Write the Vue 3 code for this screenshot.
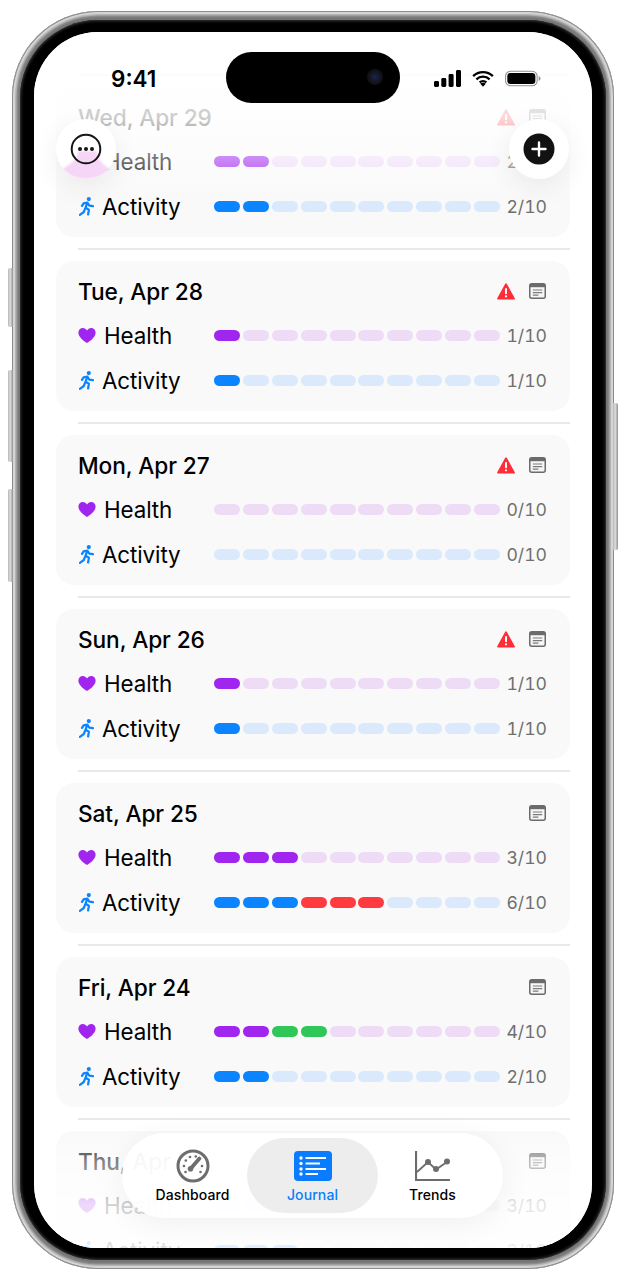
<script setup>
const P = '#a025ef', PL = '#eedcf7', B = '#0a84ff', BL = '#dae9fb', R = '#ff3b3f', G = '#30c759'

const seg = (colors, light) => {
  const out = []
  colors.forEach(([c, n]) => { for (let i = 0; i < n; i++) out.push(c) })
  while (out.length < 10) out.push(light)
  return out
}

const days = [
  { date: 'Wed, Apr 29', alert: true, health: seg([[P, 2]], PL), hc: '2/10', activity: seg([[B, 2]], BL), ac: '2/10' },
  { date: 'Tue, Apr 28', alert: true, health: seg([[P, 1]], PL), hc: '1/10', activity: seg([[B, 1]], BL), ac: '1/10' },
  { date: 'Mon, Apr 27', alert: true, health: seg([], PL), hc: '0/10', activity: seg([], BL), ac: '0/10' },
  { date: 'Sun, Apr 26', alert: true, health: seg([[P, 1]], PL), hc: '1/10', activity: seg([[B, 1]], BL), ac: '1/10' },
  { date: 'Sat, Apr 25', alert: false, health: seg([[P, 3]], PL), hc: '3/10', activity: seg([[B, 3], [R, 3]], BL), ac: '6/10' },
  { date: 'Fri, Apr 24', alert: false, health: seg([[P, 2], [G, 2]], PL), hc: '4/10', activity: seg([[B, 2]], BL), ac: '2/10' },
  { date: 'Thu, Apr 23', alert: false, health: seg([[P, 3]], PL), hc: '3/10', activity: seg([[B, 3]], BL), ac: '3/10' }
]
</script>

<template>
  <div class="page">
    <div class="frame">
      <i class="side l1"></i><i class="side l2"></i><i class="side l3"></i><i class="side r1"></i>
      <div class="black">
        <div class="screen">
          <div class="list">
            <div class="rule"></div>
            <template v-for="d in days" :key="d.date">
              <article class="card">
                <header class="head">
                  <h2 class="date">{{ d.date }}</h2>
                  <svg v-if="d.alert" class="alert" viewBox="0 0 18 17" width="18" height="17">
                    <path d="M9 1.200 17 15.600H1Z" fill="#ff2d38" stroke="#ff2d38" stroke-width="1.800" stroke-linejoin="round"/>
                    <rect x="8" y="5" width="2" height="6.200" rx="1" fill="#fff"/>
                    <circle cx="9" cy="13.300" r="1.100" fill="#fff"/>
                  </svg>
                  <svg class="doc" viewBox="0 0 17 16" width="17" height="16">
                    <rect x=".75" y=".75" width="15.500" height="14.500" rx="2" fill="#f6f6f6" stroke="#6b6b6b" stroke-width="1.500"/>
                    <rect x="1" y="1" width="15" height="3.200" fill="#6b6b6b"/>
                    <path d="M3.800 7h9.400M3.800 9.600h9.400M3.800 12.200h5.600" stroke="#7b7b7b" stroke-width="1.200"/>
                  </svg>
                </header>
                <div class="row">
                  <span class="label">
                    <svg class="heart" viewBox="0 0 18 16" width="18" height="17">
                      <path d="M9 15.600C3.600 11.800.4 9 .4 5 .4 2.400 2.400.4 4.800.4 6.600.4 8.100 1.400 9 3c.9-1.600 2.400-2.600 4.200-2.600 2.400 0 4.400 2 4.400 4.600 0 4-3.200 6.800-8.600 10.600Z" fill="#a025ef"/>
                    </svg>
                    <span>Health</span>
                  </span>
                  <span class="bars"><i v-for="(c, i) in d.health" :key="i" class="bar" :style="{ background: c }"></i></span>
                  <span class="count">{{ d.hc }}</span>
                </div>
                <div class="row">
                  <span class="label run">
                    <svg class="runner" viewBox="0 0 15 19" width="15" height="19">
                      <circle cx="9.800" cy="2.100" r="2.100" fill="#0a84ff"/>
                      <path d="M8.300 5.600 6.500 10.800M8.300 5.600 4.600 6.300 3 8.800M8.300 5.600l2 3 3.600.6M6.500 10.800l3.400 1.900-.8 4.800M6.100 11.600 4.800 15 .9 17.800" fill="none" stroke="#0a84ff" stroke-width="2.200" stroke-linecap="round" stroke-linejoin="round"/>
                    </svg>
                    <span>Activity</span>
                  </span>
                  <span class="bars"><i v-for="(c, i) in d.activity" :key="i" class="bar" :style="{ background: c }"></i></span>
                  <span class="count">{{ d.ac }}</span>
                </div>
              </article>
              <div class="rule"></div>
            </template>
          </div>

          <div class="fade-top"></div>
          <div class="fade-bottom"></div>

          <div class="status">
            <span class="time">9:41</span>
            <div class="status-icons">
              <svg viewBox="0 0 27 17" width="27" height="17">
                <rect x="0" y="11" width="5" height="6" rx="1.400"/><rect x="7.300" y="8" width="5" height="9" rx="1.400"/>
                <rect x="14.600" y="4" width="5" height="13" rx="1.400"/><rect x="22" y="0" width="5" height="17" rx="1.400"/>
              </svg>
              <svg viewBox="0 0 23 17" width="22" height="17">
                <path d="M1.200 6A14.600 14.600 0 0 1 21.800 6M4.600 9.400a9.800 9.800 0 0 1 13.800 0M8 12.600a5 5 0 0 1 7 0" fill="none" stroke="#000" stroke-width="2.400"/>
                <path d="M11.500 17 8.600 14a4.200 4.200 0 0 1 5.800 0Z"/>
              </svg>
              <svg viewBox="0 0 37 17" width="36" height="17">
                <rect x=".6" y="1" width="32.400" height="15" rx="5" fill="none" stroke="#8e8e8e" stroke-width="1.100"/>
                <rect x="2.400" y="2.800" width="28.800" height="11.400" rx="3.400"/>
                <path d="M34.600 6v5c1.200-.4 1.900-1.400 1.900-2.500S35.800 6.400 34.600 6Z" fill="#8e8e8e"/>
              </svg>
            </div>
          </div>
          <div class="island"><i class="camera"></i></div>

          <button class="fab more">
            <svg class="smear" viewBox="0 0 60 30" width="60" height="30">
              <path d="M22 2H41C41 10 47 16 54 20 48 28 38 30 30 30 21 30 11 28 6 20 14 16 21 10 22 2Z" fill="#f6d6f6"/>
            </svg>
            <svg viewBox="0 0 32 32" width="32" height="32">
              <circle cx="16" cy="16" r="14.300" fill="none" stroke="#161616" stroke-width="2"/>
              <circle cx="10" cy="16" r="2" fill="#161616"/><circle cx="16" cy="16" r="2" fill="#161616"/><circle cx="22" cy="16" r="2" fill="#161616"/>
            </svg>
          </button>
          <button class="fab add">
            <svg viewBox="0 0 32 32" width="32" height="32">
              <circle cx="16" cy="16" r="15.500" fill="#121212"/>
              <path d="M16 9.500v13M9.500 16h13" stroke="#fff" stroke-width="2.400" stroke-linecap="round"/>
            </svg>
          </button>

          <nav class="tabs">
            <div class="tab">
              <svg viewBox="0 0 34 34" width="34" height="34">
                <circle cx="17" cy="17" r="15" fill="none" stroke="#6d6d6d" stroke-width="3"/>
                <path d="M14.800 19.600 23.400 9.600" stroke="#6d6d6d" stroke-width="3.800" stroke-linecap="round"/>
                <circle cx="14.500" cy="19.800" r="2.800" fill="#6d6d6d"/>
                <g fill="#6d6d6d"><circle cx="8" cy="17" r="1.300"/><circle cx="9.800" cy="11.500" r="1.300"/><circle cx="14" cy="8" r="1.300"/><circle cx="19.800" cy="7.500" r="1.300"/><circle cx="26" cy="17" r="1.300"/><circle cx="9.500" cy="23" r="1.300"/><circle cx="24.500" cy="23" r="1.300"/></g>
              </svg>
              <span>Dashboard</span>
            </div>
            <div class="tab active">
              <svg viewBox="0 0 38 30" width="38" height="30">
                <rect width="38" height="30" rx="4" fill="#0a7cff"/>
                <g fill="#fff"><circle cx="7" cy="7" r="1.700"/><circle cx="7" cy="12.500" r="1.700"/><circle cx="7" cy="18" r="1.700"/><circle cx="7" cy="23" r="1.700"/></g>
                <path d="M11.500 7H32M11.500 12.500H26M11.500 18H32M11.500 23H24" stroke="#fff" stroke-width="1.800"/>
              </svg>
              <span>Journal</span>
            </div>
            <div class="tab">
              <svg viewBox="0 0 36 30" width="36" height="30">
                <path d="M1 0v29h34" fill="none" stroke="#6d6d6d" stroke-width="2.200"/>
                <path d="M2 21 13 11l8 7.500L32 11" fill="none" stroke="#6d6d6d" stroke-width="1.800"/>
                <circle cx="13" cy="11" r="3" fill="#6d6d6d"/><circle cx="21" cy="18" r="3" fill="#6d6d6d"/><circle cx="32" cy="10.500" r="3" fill="#6d6d6d"/>
              </svg>
              <span>Trends</span>
            </div>
          </nav>
        </div>
      </div>
    </div>
  </div>
</template>

<style>
html, body { background: #fff; }
</style>

<style scoped>
.page {
  width: 626px;
  height: 1280px;
  padding: 11px 12px;
  box-sizing: border-box;
  font-family: Inter, "Liberation Sans", sans-serif;
  color: #000;
  background: #fff;
  overflow: hidden;
}
.frame {
  position: relative;
  height: 1258px;
  box-sizing: border-box;
  padding: 9px 8px;
  border-radius: 86px;
  background: #757575;
  box-shadow: inset 0 0 0 1px #8c8c8c, inset 0 0 1px 3px #d6d6d6, inset 0 0 1px 4.500px #b4b4b4, inset 0 0 2px 6px #8e8e8e;
}
.side {
  position: absolute;
  width: 5px;
  background: linear-gradient(90deg, #b5b5b5, #dedede 45%, #8f8f8f);
}
.l1, .l2, .l3 { left: -4px; border-radius: 2px 0 0 2px; }
.r1 { right: -4px; top: 392px; height: 147px; border-radius: 0 2px 2px 0; }
.l1 { top: 257px; height: 59px; }
.l2 { top: 359px; height: 92px; }
.l3 { top: 478px; height: 93px; }
.black {
  height: 100%;
  box-sizing: border-box;
  padding: 12px 14px;
  background: #000;
  border-radius: 78px;
  box-shadow: inset 0 0 3px 1px #3a3a3a;
}
.screen {
  position: relative;
  height: 100%;
  overflow: hidden;
  background: #fff;
  border-radius: 64px;
}
.list {
  display: flex;
  flex-direction: column;
  gap: 11.250px;
  padding: 42.250px 22px 0;
}
.rule {
  flex: none;
  height: 1.500px;
  margin-left: 22px;
  background: #e9e9e9;
}
.card {
  flex: none;
  height: 150px;
  box-sizing: border-box;
  padding: 12px 23px 0 22px;
  background: #f9f9f9;
  border-radius: 18px;
}
.head {
  display: flex;
  align-items: center;
  height: 36px;
  margin-bottom: 4px;
}
.date {
  flex: 1;
  margin: 0;
  font-size: 22.700px;
  font-weight: 500;
  letter-spacing: -0.1px;
}
.alert { margin-right: 14px; }
.doc { margin-right: 1px; }
.row {
  display: flex;
  align-items: center;
  height: 45px;
}
.label {
  display: flex;
  align-items: center;
  gap: 8px;
  width: 136px;
  font-size: 22.400px;
  letter-spacing: -0.1px;
}
.runner { margin-left: 1px; }
.bars {
  display: grid;
  grid-template-columns: repeat(10, 26px);
  gap: 2.900px;
}
.bar {
  height: 11px;
  border-radius: 6px;
}
.count {
  margin-left: auto;
  font-size: 17.600px;
  font-variant-numeric: tabular-nums;
  color: #6f6f6f;
}
.fade-top, .fade-bottom {
  position: absolute;
  left: 0;
  right: 0;
  pointer-events: none;
}
.fade-top {
  top: 0;
  height: 170px;
  background: linear-gradient(180deg, rgba(255,255,255,.97) 0, rgba(255,255,255,.8) 86px, rgba(255,255,255,.42) 131px, rgba(255,255,255,0) 170px);
}
.fade-bottom {
  bottom: 0;
  height: 118px;
  background: linear-gradient(180deg, rgba(255,255,255,0) 0, rgba(255,255,255,.5) 30px, rgba(255,255,255,.82) 75px, rgba(255,255,255,.88) 118px);
}
.status {
  position: absolute;
  top: 35px;
  left: 77px;
  right: 51px;
  height: 22px;
  display: flex;
  align-items: center;
  justify-content: space-between;
}
.time {
  font-size: 22.500px;
  font-weight: 600;
}
.status-icons {
  display: flex;
  align-items: center;
  gap: 11px;
}
.island {
  position: absolute;
  top: 20px;
  left: 192px;
  width: 174px;
  height: 51px;
  background: #000;
  border-radius: 26px;
}
.camera {
  position: absolute;
  right: 17px;
  top: 17px;
  width: 16px;
  height: 16px;
  border-radius: 50%;
  background: radial-gradient(circle, #1c2550 0, #14161f 45%, #080808 100%);
}
.fab {
  position: absolute;
  top: 87px;
  width: 60px;
  height: 60px;
  padding: 0;
  display: flex;
  align-items: center;
  justify-content: center;
  border: 0;
  border-radius: 50%;
  background: #fff;
  box-shadow: 0 8px 28px rgba(0,0,0,.07);
  overflow: hidden;
}
.fab svg { position: relative; }
.more { left: 22px; }
.add { right: 23px; }
.fab .smear {
  position: absolute;
  left: 0;
  bottom: 0;
  filter: blur(1px);
}
.tabs {
  position: absolute;
  left: 88px;
  top: 1101px;
  width: 381px;
  height: 85px;
  box-sizing: border-box;
  padding: 5px 10.500px;
  display: grid;
  grid-template-columns: repeat(3, 120px);
  background: rgba(255,255,255,.94);
  border-radius: 43px;
  box-shadow: 0 6px 30px rgba(0,0,0,.06);
}
.tab {
  display: flex;
  flex-direction: column;
  align-items: center;
  padding-top: 11px;
  font-size: 14px;
  font-weight: 500;
  letter-spacing: 0.1px;
}
.tab svg { height: 34px; margin-bottom: 3px; }
.tab.active {
  margin: 0 -5.500px;
  background: #ededed;
  border-radius: 38px;
  color: #0a7cff;
}
</style>
